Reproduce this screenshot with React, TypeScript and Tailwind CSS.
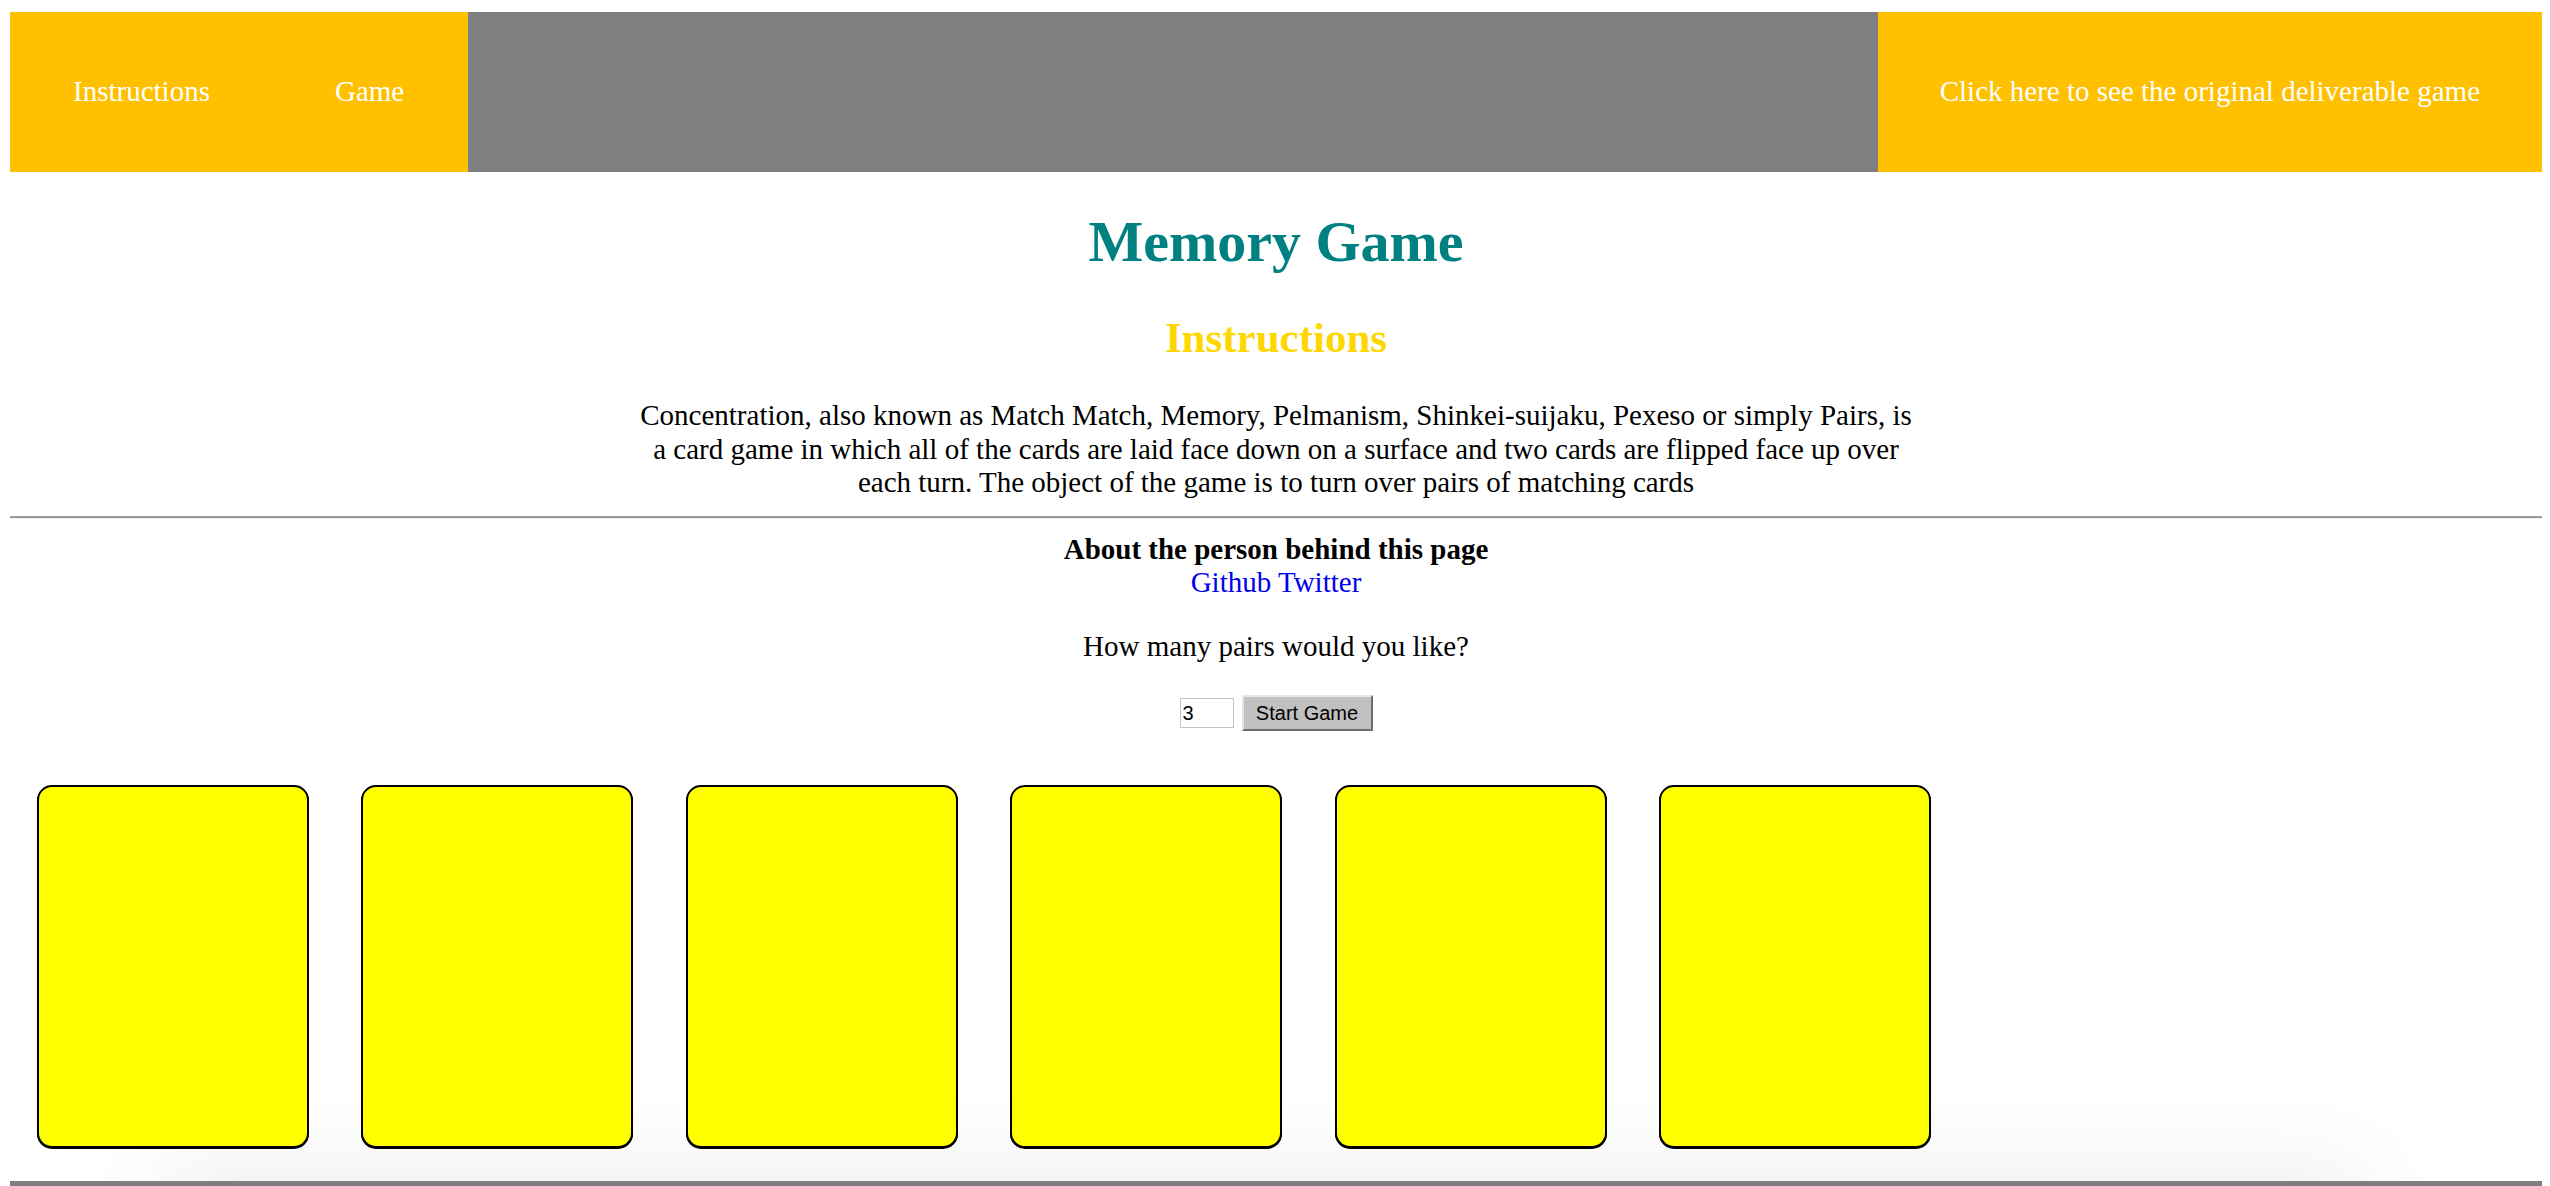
import React from "react";

const serif = "font-['Liberation_Serif','Times_New_Roman',serif]";
const sans = "font-['Liberation_Sans',Arial,sans-serif]";

const cards = [0, 1, 2, 3, 4, 5];

const App: React.FC = () => {
  return (
    <div className={`${serif} min-h-screen overflow-hidden bg-white pt-[12px] pl-[10px] pr-[8px] text-black`}>
      {/* Nav */}
      <nav className="flex h-[160px] text-[29px] text-white">
        <div className="flex items-center bg-[#ffc000]">
          <a className="px-[63px]">Instructions</a>
          <a className="pl-[62px] pr-[64px]">Game</a>
        </div>
        <div className="flex-1 bg-[#808080]" />
        <div className="flex items-center bg-[#ffc000] px-[62px]">
          <a>Click here to see the original deliverable game</a>
        </div>
      </nav>

      {/* Title + instructions */}
      <h1 className="mt-[37px] text-center text-[58px] font-bold leading-[66px] text-[#008080]">
        Memory Game
      </h1>
      <h2 className="mt-[38px] text-center text-[43px] font-bold leading-[50px] text-[#ffd700]">
        Instructions
      </h2>
      <p className="mx-auto mt-[36px] max-w-[1278px] text-center text-[29px] leading-[33.5px]">
        Concentration, also known as Match Match, Memory, Pelmanism, Shinkei-suijaku, Pexeso or simply Pairs, is
        a card game in which all of the cards are laid face down on a surface and two cards are flipped face up over
        each turn. The object of the game is to turn over pairs of matching cards
      </p>

      <hr className="mt-[16px] border-t-2 border-b border-x-0 border-t-[#9a9a9a] border-b-[#ececec]" />

      {/* About */}
      <div className="mt-[14px] text-center text-[29px] leading-[33.5px]">
        <p className="font-bold">About the person behind this page</p>
        <p>
          <a className="text-[#0000ee]">Github</a> <a className="text-[#0000ee]">Twitter</a>
        </p>
        <p className="mt-[30px]">How many pairs would you like?</p>
      </div>

      {/* Controls */}
      <div className={`${sans} mt-[32px] flex items-center justify-center gap-[8px] text-[20px]`}>
        <input
          defaultValue="3"
          className="h-[30px] w-[54px] border border-[#c4c4c4] bg-white px-[2px] text-[20px] leading-none text-black outline-none"
        />
        <button className="h-[36px] w-[131px] border-2 border-t-[#e6e6e6] border-l-[#e6e6e6] border-r-[#6e6e6e] border-b-[#6e6e6e] bg-[#c0c0c0] text-[20px] text-black">
          Start Game
        </button>
      </div>

      {/* Cards */}
      <div className="relative z-10 mt-[54px] flex gap-[52.4px] pl-[27px]">
        {cards.map((c) => (
          <div
            key={c}
            className="h-[363px] w-[272px] rounded-[15px] border-2 border-black bg-[#ffff00] shadow-[0_1px_0_#000]"
          />
        ))}
      </div>

      {/* Footer */}
      <div className="relative mt-[33px]">
        <div className="absolute left-[170px] right-[200px] top-[6px] h-[60px] shadow-[0_0_90px_20px_rgba(0,0,0,0.07)]" />
        <div className="relative h-[40px] bg-[#7f7f7f]" />
      </div>
    </div>
  );
};

export default App;
